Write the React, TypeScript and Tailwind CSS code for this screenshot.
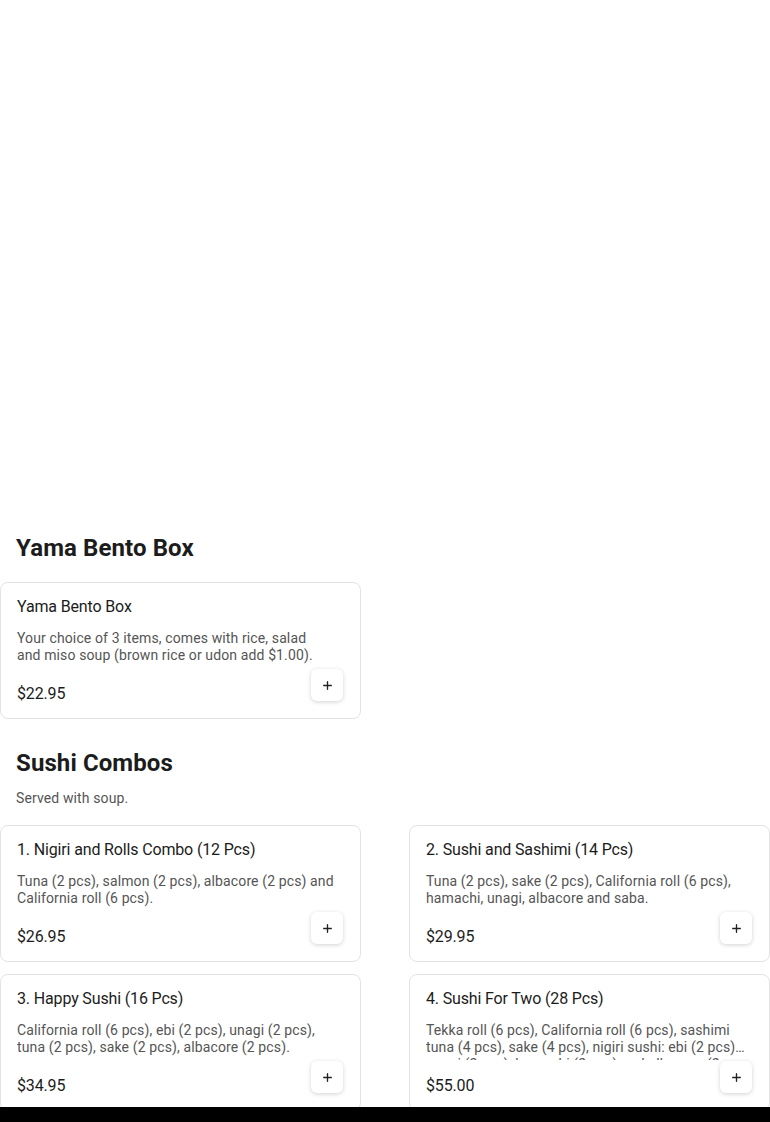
import { Plus } from 'lucide-react';

const BENTO = [
  {
    id: 1,
    name: 'Yama Bento Box',
    description:
      'Your choice of 3 items, comes with rice, salad and\u00a0miso soup (brown rice or udon add $1.00).',
    price: '$22.95',
  },
];

const COMBOS = [
  {
    id: 2,
    name: '1. Nigiri and Rolls Combo (12 Pcs)',
    description:
      'Tuna (2 pcs), salmon (2 pcs), albacore (2 pcs) and California roll (6 pcs).',
    price: '$26.95',
  },
  {
    id: 3,
    name: '2. Sushi and Sashimi (14 Pcs)',
    description:
      'Tuna (2 pcs), sake (2 pcs), California roll (6 pcs), hamachi, unagi, albacore and saba.',
    price: '$29.95',
  },
  {
    id: 4,
    name: '3. Happy Sushi (16 Pcs)',
    description:
      'California roll (6 pcs), ebi (2 pcs), unagi (2 pcs), tuna (2 pcs), sake (2 pcs), albacore (2 pcs).',
    price: '$34.95',
  },
  {
    id: 5,
    name: '4. Sushi For Two (28 Pcs)',
    description:
      'Tekka roll (6 pcs), California roll (6 pcs), sashimi tuna (4 pcs), sake (4 pcs), nigiri sushi: ebi (2 pcs), unagi (2 pcs), hamachi (2 pcs) and albacore (2 pcs).',
    price: '$55.00',
  },
];

interface Item {
  id: number;
  name: string;
  description: string;
  price: string;
}

function MenuCard({ item }: { item: Item }) {
  return (
    <div className="flex h-[137px] flex-col rounded-lg border border-[#e3e3e3] bg-white px-4 pt-3 pb-3">
      <h3 className="truncate text-base leading-6 tracking-[-0.15px] text-[#1c1c1c]">{item.name}</h3>
      <p className="mt-[11px] line-clamp-2 h-[39px] overflow-hidden pr-2 text-sm leading-[17px] tracking-[0.12px] text-[#555555]">
        {item.description}
      </p>
      <div className="mt-px flex items-start justify-between">
        <span className="mt-[13px] text-base leading-6 tracking-[-0.15px] text-[#1c1c1c]">{item.price}</span>
        <button
          type="button"
          className="mr-px flex h-8 w-8 items-center justify-center rounded-md bg-white shadow-[0_1px_4px_rgba(0,0,0,0.18)]"
        >
          <Plus size={13} strokeWidth={2.5} className="text-[#222]" />
        </button>
      </div>
    </div>
  );
}

function Section({
  title,
  subtitle,
  items,
}: {
  title: string;
  subtitle?: string;
  items: Item[];
}) {
  return (
    <section>
      <div className="px-4">
        <h2 className="text-2xl leading-8 font-bold tracking-[0.1px] text-[#1c1c1c]">{title}</h2>
        {subtitle && (
          <p className="mt-[9px] text-sm leading-5 tracking-[0.12px] text-[#555555]">
            {subtitle}
          </p>
        )}
      </div>
      <div
        className={
          subtitle
            ? 'mt-[17px] grid grid-cols-2 gap-x-12 gap-y-3'
            : 'mt-[18px] grid grid-cols-2 gap-x-12 gap-y-3'
        }
      >
        {items.map((item) => (
          <MenuCard key={item.id} item={item} />
        ))}
      </div>
    </section>
  );
}

export default function App() {
  return (
    <div className="min-h-screen bg-white font-['Roboto','Liberation_Sans',sans-serif]">
      <div className="h-[532px]" />
      <Section title="Yama Bento Box" items={BENTO} />
      <div className="h-7" />
      <Section title="Sushi Combos" subtitle="Served with soup." items={COMBOS} />
      <div className="h-20" />
      <div className="fixed inset-x-0 bottom-0 h-[15px] bg-black" />
    </div>
  );
}
